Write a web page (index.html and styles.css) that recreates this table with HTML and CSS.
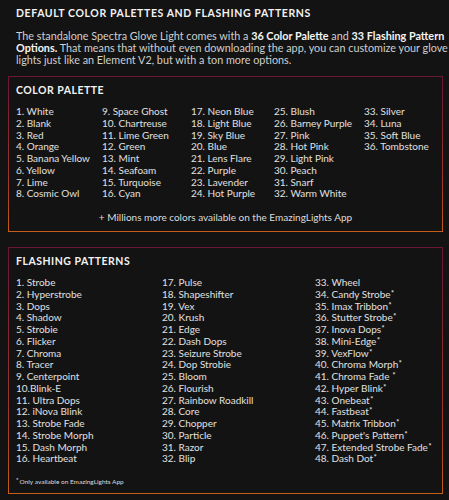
FILE: index.html
```html
<!DOCTYPE html>
<html>
<head>
<meta charset="utf-8">
<link rel="stylesheet" href="styles.css">
</head>
<body>
<div class="page">
  <h1 class="title">DEFAULT COLOR PALETTES AND FLASHING PATTERNS</h1>
  <p class="intro">The standalone Spectra Glove Light comes with a <b>36 Color Palette</b> and <b>33 Flashing Pattern</b><br><b>Options.</b> That means that without even downloading the app, you can customize your glove<br>lights just like an Element V2, but with a ton more options.</p>

  <section class="box">
    <h2 class="box-title">COLOR PALETTE</h2>
    <div class="palette">
      <ul class="col">
        <li>1. White</li><li>2. Blank</li><li>3. Red</li><li>4. Orange</li><li>5. Banana Yellow</li><li>6. Yellow</li><li>7. Lime</li><li>8. Cosmic Owl</li>
      </ul>
      <ul class="col">
        <li>9. Space Ghost</li><li>10. Chartreuse</li><li>11. Lime Green</li><li>12. Green</li><li>13. Mint</li><li>14. Seafoam</li><li>15. Turquoise</li><li>16. Cyan</li>
      </ul>
      <ul class="col">
        <li>17. Neon Blue</li><li>18. Light Blue</li><li>19. Sky Blue</li><li>20. Blue</li><li>21. Lens Flare</li><li>22. Purple</li><li>23. Lavender</li><li>24. Hot Purple</li>
      </ul>
      <ul class="col">
        <li>25. Blush</li><li>26. Barney Purple</li><li>27. Pink</li><li>28. Hot Pink</li><li>29. Light Pink</li><li>30. Peach</li><li>31. Snarf</li><li>32. Warm White</li>
      </ul>
      <ul class="col">
        <li>33. Silver</li><li>34. Luna</li><li>35. Soft Blue</li><li>36. Tombstone</li>
      </ul>
    </div>
    <p class="more">+ Millions more colors available on the EmazingLights App</p>
  </section>

  <section class="box box-patterns">
    <h2 class="box-title">FLASHING PATTERNS</h2>
    <div class="patterns">
      <ul class="col">
        <li>1. Strobe</li><li>2. Hyperstrobe</li><li>3. Dops</li><li>4. Shadow</li><li>5. Strobie</li><li>6. Flicker</li><li>7. Chroma</li><li>8. Tracer</li><li>9. Centerpoint</li><li>10.Blink-E</li><li>11. Ultra Dops</li><li>12. iNova Blink</li><li>13. Strobe Fade</li><li>14. Strobe Morph</li><li>15. Dash Morph</li><li>16. Heartbeat</li>
      </ul>
      <ul class="col">
        <li>17. Pulse</li><li>18. Shapeshifter</li><li>19. Vex</li><li>20. Krush</li><li>21. Edge</li><li>22. Dash Dops</li><li>23. Seizure Strobe</li><li>24. Dop Strobie</li><li>25. Bloom</li><li>26. Flourish</li><li>27. Rainbow Roadkill</li><li>28. Core</li><li>29. Chopper</li><li>30. Particle</li><li>31. Razor</li><li>32. Blip</li>
      </ul>
      <ul class="col">
        <li>33. Wheel</li><li>34. Candy Strobe<sup>*</sup></li><li>35. Imax Tribbon<sup>*</sup></li><li>36. Stutter Strobe<sup>*</sup></li><li>37. Inova Dops<sup>*</sup></li><li>38. Mini-Edge<sup>*</sup></li><li>39. VexFlow<sup>*</sup></li><li>40. Chroma Morph<sup>*</sup></li><li>41. Chroma Fade <sup>*</sup></li><li>42. Hyper Blink<sup>*</sup></li><li>43. Onebeat<sup>*</sup></li><li>44. Fastbeat<sup>*</sup></li><li>45. Matrix Tribbon<sup>*</sup></li><li>46. Puppet's Pattern<sup>*</sup></li><li>47. Extended Strobe Fade<sup>*</sup></li><li>48. Dash Dot<sup>*</sup></li>
      </ul>
    </div>
    <p class="note"><sup>*</sup>Only available on EmazingLights App</p>
  </section>
</div>
</body>
</html>
```

FILE: styles.css
```css
html, body {
  margin: 0;
  padding: 0;
  background: #131313;
}
.page {
  padding: 7px 6px 0 8px;
  font-family: "Lato", "Open Sans", sans-serif;
  color: #dcdcdc;
}
.title {
  margin: 0 0 0 8px;
  font-size: 10.5px;
  line-height: 12px;
  font-weight: 700;
  letter-spacing: 0.6px;
  color: #f2f2f2;
}
.intro {
  margin: 11px 0 0 8px;
  font-size: 10.8px;
  line-height: 12px;
  color: #cfcfcf;
  white-space: nowrap;
}
.intro b {
  color: #f4f4f4;
}
.box {
  margin-top: 10px;
  width: 435px;
  box-sizing: border-box;
  border: 1px solid;
  border-image: linear-gradient(to bottom, #6a1638, #a03a2a 70%, #c65d1a) 1;
  padding: 7px 7px 8px 7px;
}
.box-patterns {
  margin-top: 15px;
  padding-bottom: 6px;
}
.box-title {
  margin: 0;
  font-size: 10.5px;
  line-height: 12px;
  font-weight: 700;
  letter-spacing: 0.5px;
  color: #f2f2f2;
}
.col {
  list-style: none;
  margin: 0;
  padding: 0;
}
.col li {
  font-size: 10px;
  line-height: 11.75px;
  white-space: nowrap;
  color: #e0e0e0;
}
.palette {
  display: grid;
  grid-template-columns: 86px 89px 83px 90px auto;
  margin-top: 10px;
}
.patterns {
  display: grid;
  grid-template-columns: 146px 153px auto;
  margin-top: 10px;
}
sup {
  font-size: 7px;
  font-weight: 700;
  line-height: 0;
  vertical-align: 2px;
  margin-left: 0.5px;
}
.more {
  margin: 11px 0 0 0;
  text-align: center;
  font-size: 10px;
  line-height: 12px;
}
.note {
  margin: 12px 0 0 0;
  font-size: 6.5px;
  line-height: 10px;
}
.note sup {
  font-size: 6px;
  vertical-align: 2px;
  margin: 0 1px 0 0;
}
```
